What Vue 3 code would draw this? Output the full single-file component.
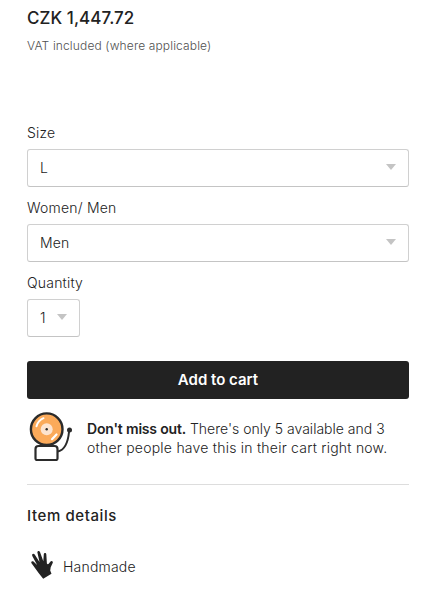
<script setup>
import { ref } from 'vue'

const options = ref([
  { label: 'Size', value: 'L', key: 'size' },
  { label: 'Women/ Men', value: 'Men', key: 'fit' },
  { label: 'Quantity', value: '1', key: 'quantity' },
])
</script>

<template>
  <main class="buy-box">
    <p class="price">CZK 1,447.72</p>
    <p class="vat">VAT included (where applicable)</p>

    <div class="options">
      <div v-for="o in options" :key="o.key" class="field" :class="o.key">
        <span class="label">{{ o.label }}</span>
        <button type="button" class="select">
          <span class="value">{{ o.value }}</span>
          <svg class="caret" width="10" height="6" viewBox="0 0 10 6"><path d="M0 0h10L5 6z" fill="#c4c4c4" /></svg>
        </button>
      </div>
    </div>

    <button type="button" class="cart"><span>Add to cart</span></button>

    <div class="notice">
      <svg class="bell" width="46" height="50" viewBox="0 0 46 50" fill="none" stroke="#2b2b2b">
        <path d="M31 40.500c6-1.500 10-9 11-19.500" stroke-width="2" />
        <circle cx="42.500" cy="19" r="2.500" fill="#2b2b2b" stroke="none" />
        <circle cx="19.700" cy="18.200" r="15.800" fill="#fbaa5a" stroke-width="2.400" />
        <circle cx="19.700" cy="18.200" r="6" fill="#fde4d0" stroke="none" />
        <circle cx="19.700" cy="18.200" r="1.200" fill="#2b2b2b" stroke="none" />
        <path d="M9.500 15.200c1-3.600 3.600-6.500 7-8" stroke="#fff" stroke-width="2" stroke-linecap="round" />
        <path d="M25 28.200l4.500-4.700" stroke="#fff" stroke-width="2.200" stroke-linecap="round" />
        <path d="M11.500 35h16c2 0 3 1.200 3 3v9.600q0 1.400-1.400 1.400H9.900q-1.400 0-1.400-1.400V38c0-1.800 1-3 3-3z" fill="#fff" stroke-width="2.200" />
      </svg>
      <p class="notice-text">
        <span class="line first"><b>Don't miss out.</b> There's only 5 available and 3</span>
        <span class="line second">other people have this in their cart right now.</span>
      </p>
    </div>

    <h2 class="title">Item details</h2>
    <div class="detail">
      <svg class="hand" width="24" height="30" viewBox="0 0 24 30" fill="#222">
        <path d="M13.200 29.800L8.800 24.200 1.500 14.200C.600 12.700 2.200 11.500 3.500 12.600L7.100 15.900 2.300 6.900C1.500 5.200 3.500 4 4.700 5.600L9.500 13 7.400 3.600C7.100 1.700 9.300 1.200 10 3L13.300 12.200 13.800 5.300C14 3.500 16.200 3.600 16.300 5.300L16.900 14.500C17.400 15.600 18.300 15.500 18.900 14.600L20.300 12.700C21.400 11.300 23.200 12.200 22.800 13.700L20.700 18.200 20.200 21.400 21.500 24.700Z" />
      </svg>
      <span class="detail-text">Handmade</span>
    </div>
  </main>
</template>

<style>
body {
  background: #fff;
}
</style>

<style scoped>
.buy-box {
  box-sizing: border-box;
  width: 432px;
  height: 590px;
  padding: 6px 23px 0 27px;
  overflow: hidden;
  font-family: Inter, "Liberation Sans", sans-serif;
  font-size: 14px;
  font-weight: 300;
  letter-spacing: 0.2px;
  color: #222;
}

p,
h2 {
  margin: 0;
}

.price {
  font-size: 17px;
  line-height: 24px;
  font-weight: 500;
  letter-spacing: 0.05px;
}

.vat {
  margin-top: 6px;
  font-size: 12px;
  line-height: 20px;
  letter-spacing: 0.14px;
  color: #505050;
}

.options {
  display: flex;
  flex-direction: column;
  gap: 7px;
  margin-top: 67px;
}

.field {
  display: flex;
  flex-direction: column;
}

.label {
  height: 26px;
  line-height: 20px;
  white-space: nowrap;
}

.select {
  box-sizing: border-box;
  display: flex;
  align-items: center;
  justify-content: space-between;
  width: 100%;
  height: 38px;
  margin-bottom: 4px;
  padding: 0 12px;
  border: 1px solid #d0d0d0;
  border-bottom-color: #c4c4c4;
  border-radius: 3px;
  background: #fff;
  font: inherit;
  letter-spacing: inherit;
  color: inherit;
}

.value {
  padding-bottom: 1px;
}

.field .caret {
  margin-bottom: 2px;
}

.quantity .select {
  width: 53px;
}

.cart {
  display: block;
  width: 100%;
  height: 38px;
  margin-top: 20px;
  padding: 0 0 2px;
  border: 0;
  border-radius: 3px;
  background: #222;
  color: #fff;
  font: inherit;
  font-size: 15px;
  font-weight: 600;
  white-space: nowrap;
}

.notice {
  display: flex;
  height: 85px;
  border-bottom: 1px solid #ddd;
}

.bell {
  flex: none;
  margin: 12px 14px 0 0;
}

.notice-text {
  padding-top: 20px;
  line-height: 19px;
}

.line {
  display: block;
  white-space: nowrap;
}

.first {
  letter-spacing: 0;
}

.second {
  letter-spacing: 0.23px;
}

.line b {
  font-weight: 600;
  letter-spacing: -0.18px;
}

.title {
  margin-top: 19px;
  font-size: 15px;
  line-height: 24px;
  font-weight: 500;
  letter-spacing: 0.6px;
}

.detail {
  display: flex;
  align-items: center;
  gap: 9px;
  margin-top: 21px;
  padding-left: 3px;
}

.detail-text {
  padding-top: 5px;
}
</style>
